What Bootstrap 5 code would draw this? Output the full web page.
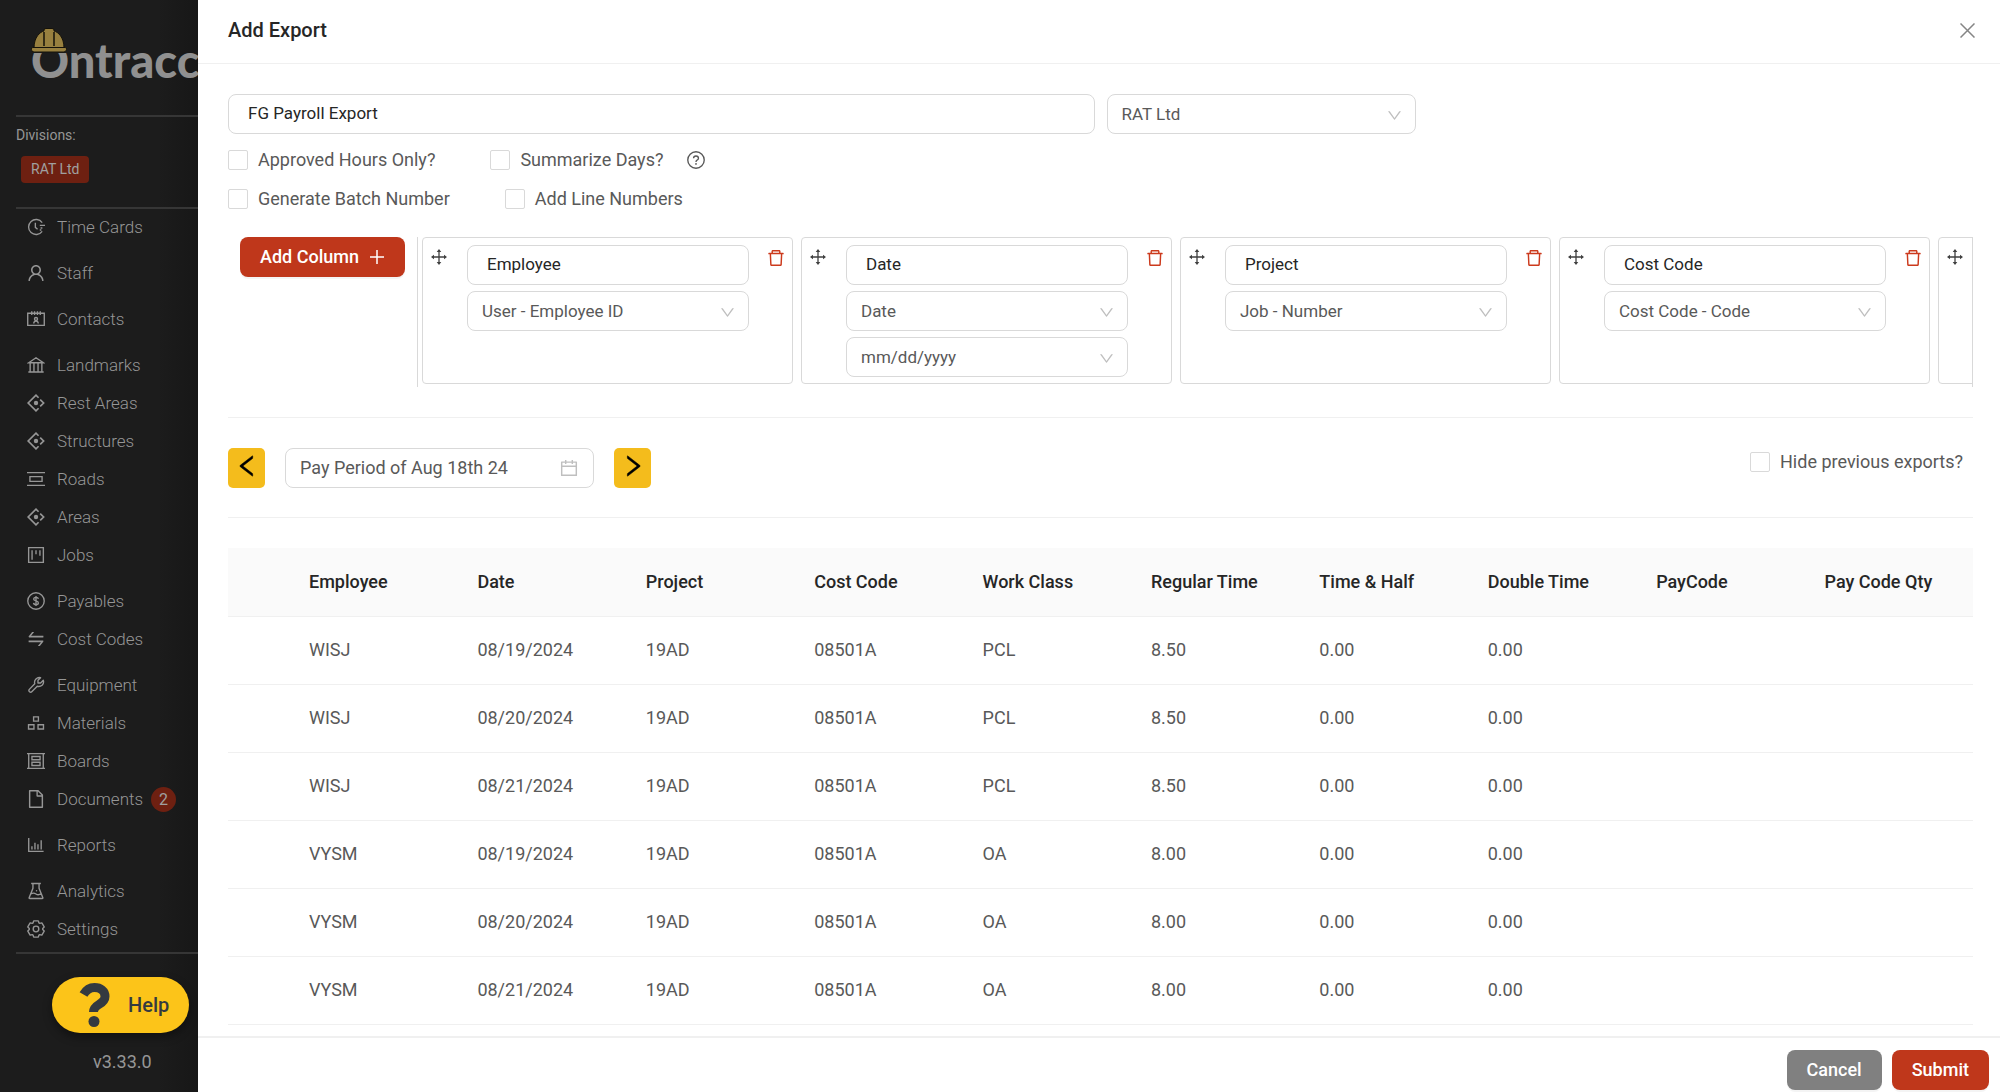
<!DOCTYPE html>
<html lang="en">
<head>
<meta charset="utf-8">
<meta name="viewport" content="width=device-width, initial-scale=1">
<title>Add Export</title>
<link href="https://cdn.jsdelivr.net/npm/bootstrap@5.3.0/dist/css/bootstrap.min.css" rel="stylesheet">
<style>
:root { --brand: #bf371b; --gold: #f4bc1c; --edge: #d9d9d9; --hair: #f0f0f0; --ink: #262626; --soft: #595959; }
body { font-family: Roboto, "Liberation Sans", sans-serif; font-size: 18px; line-height: 24px; color: var(--soft); background: #fff; }
svg { display: block; flex: none; }
.ico { fill: currentColor; }
.line-ico { fill: none; stroke: currentColor; stroke-width: 68; }

/* dimmed sidebar */
.side { width: 198px; flex: none; background: linear-gradient(90deg, #1c1c1c 80%, #171717); color: #969696; font-weight: 300; }
.side-inner { padding-left: 16px; }
.brand-box { height: 115px; padding: 28px 0 0 15px; }
.brand-name { font-family: Lato, sans-serif; font-weight: 900; font-size: 47px; line-height: 48px; color: #909090; margin-top: 8px; white-space: nowrap; }
.hat { position: absolute; left: 0; top: 0; }
.rule { border-top: 2px solid #363636; }
.div-label { font-size: 14px; font-weight: 400; line-height: 20px; margin: 8px 0 11px; }
.div-tag { background: #6e2011; color: #a0a0a0; font-weight: 400; font-size: 14px; line-height: 27px; border-radius: 4px; padding: 0 10px; margin-left: 5px; }
.side-nav { font-size: 17px; margin-top: -1px; }
.side-nav a { color: inherit; text-decoration: none; display: flex; align-items: center; height: 38px; padding-left: 11px; gap: 12px; }
.side-nav .apart { margin-top: 8px; }
.count-dot { background: #6e2011; color: #a0a0a0; width: 25px; height: 25px; border-radius: 50%; font-size: 16px; font-weight: 400; text-align: center; line-height: 25px; margin-left: -4px; }
.help-btn { background: #fcc419; border: 0; border-radius: 28px; width: 137px; height: 56px; color: #343a40; font-weight: 500; font-size: 20px; gap: 18px; padding-left: 27px; margin: 23px 0 17px 36px; box-shadow: 0 4px 10px #0006; }
.version { padding-left: 77px; font-weight: 400; }

/* drawer */
.drawer-head { border-bottom: 1px solid var(--hair); padding: 16px 25px 19px 30px; }
.drawer-head h1 { font-size: 20px; line-height: 28px; font-weight: 500; color: var(--ink); }
.close-x { border: 0; background: none; padding: 0; color: #858585; }
.drawer-body { padding: 30px 27px 0 30px; }
.field, .field:focus { height: 40px; border: 1px solid var(--edge); border-radius: 8px; color: var(--ink); font-size: 17px; line-height: 24px; padding: 0 19px 2px; background-color: #fff; }
.pick, .pick:focus { height: 40px; border: 1px solid var(--edge); border-radius: 8px; color: var(--soft); font-size: 17px; line-height: 24px; padding: 0 40px 0 14px; background-color: #fff;
  --bs-form-select-bg-img: url("data:image/svg+xml,%3csvg xmlns='http://www.w3.org/2000/svg' viewBox='64 64 896 896'%3e%3cpath fill='%23bfbfbf' d='M884 256h-75c-5.1 0-9.9 2.5-12.9 6.6L512 654.2 227.9 262.6c-3-4.1-7.8-6.6-12.9-6.6h-75c-6.5 0-10.3 7.4-6.5 12.7l352.6 486.1c12.8 17.6 39 17.6 51.7 0l352.6-486.1c3.9-5.3.1-12.7-6.4-12.7z'/%3e%3c/svg%3e");
  background-size: 15px 15px; background-position: right 13px top 13px; }
.name-field { width: calc(50% - 6px); }
.mid-w { width: 309px; }
.ticks { margin: 6px 0 19px; }
.tick-row { height: 39px; gap: 55px; }
.tick { display: flex; align-items: center; gap: 10px; }
.tick .form-check-input { width: 20px; height: 20px; margin: 0; border: 1px solid var(--edge); border-radius: 2px; }
.act { height: 40px; border: 0; border-radius: 8px; color: #fff; font-weight: 500; font-size: 18px; line-height: 24px; padding: 0 20px; box-shadow: 0 2px 0 #0000000b; }
.act-red, .act-red:hover { background: var(--brand); color: #fff; }
.act-gray, .act-gray:hover { background: #808080; color: #fff; }
.add-col { margin: 0 12px; padding-right: 21px; gap: 11px; }
.col-strip { height: 150px; border: solid var(--edge); border-width: 0 1px; padding-left: 4px; gap: 8px; }
.col-box { width: 371px; height: 147px; flex: none; border: 1px solid var(--edge); border-radius: 4px; padding: 7px 7px 0 8px; }
.col-fields { width: 282px; gap: 6px; margin: 0 auto 0 20px; }
.icon-btn { border: 0; background: none; padding: 0; height: 26px; display: flex; align-items: center; }
.trash { color: #cc3a1d; }
.split { border-top: 1px solid var(--hair); margin: 30px 0; }
.period + .split { margin-top: 29px; }
.step-btn { width: 37px; height: 40px; border: 0; border-radius: 5px; background: var(--gold); color: #000; padding: 0 0 5px; }
.date-box { height: 40px; border: 1px solid var(--edge); border-radius: 8px; padding: 0 15px 0 14px; color: #bfbfbf; margin: 0 20px; }
.date-box input { border: 0; outline: 0; padding: 0; color: var(--soft); min-width: 0; }
.hide-prev { padding-right: 10px; height: 27px; }
.grid { table-layout: fixed; margin: 0; border-color: var(--hair); color: var(--soft); }
.grid > :not(caption) > * > * { height: 68px; padding: 0 0 0 20px; vertical-align: middle; color: var(--soft); border-color: var(--hair); white-space: nowrap; }
.grid > thead > tr > th { background: #fafafa; color: var(--ink); font-weight: 500; }
.grid .lead-col { width: 61px; }
.drawer-foot { height: 56px; border-top: 2px solid var(--hair); padding: 12px 11px 0; gap: 10px; background: #fff; flex: none; }
</style>
</head>
<body>
<div class="d-flex vh-100 overflow-hidden">
  <aside class="side overflow-hidden">
    <div class="side-inner">
      <div class="brand-box">
        <div class="position-relative">
          <div class="pt-0 overflow-hidden"><div class="brand-name">Ontracc</div></div>
          <svg class="hat" width="36" height="25" viewBox="0 0 36 25">
            <path d="M0 0h36v25H0z" fill="#1c1c1c"/>
            <path d="M3 20C3 9 9 4 13 3V2q0-1.500 2-1.500h6q2 0 2 1.500v1c4 1 10 6 10 17z" fill="#98803f" stroke="#15120a"/>
            <path d="M1.500 19.500h33q1 0 1 2T33 24H3Q.5 24 .5 21.500t1-2z" fill="#98803f" stroke="#15120a"/>
            <path d="M13 4v14M23 4v14" stroke="#15120a" stroke-width="1.500"/>
          </svg>
        </div>
      </div>
      <div class="rule"></div>
      <div class="div-label">Divisions:</div>
      <div class="d-flex mb-4"><span class="div-tag">RAT Ltd</span></div>
      <div class="rule"></div>
      <nav class="side-nav">
        <a href="#"><svg class="line-ico" width="18" height="18" viewBox="64 64 896 896"><path d="M820 290A375 375 0 1 0 820 734M480 300v230l110 90M700 430h260M740 560h90M700 660h80"/></svg>Time Cards</a>
        <a href="#" class="apart"><svg class="ico" width="18" height="18" viewBox="64 64 896 896"><path d="M858.500 763.600a374 374 0 00-80.600-119.500 375.630 375.630 0 00-119.500-80.600c-.4-.2-.8-.3-1.200-.5C719.500 518 760 444.700 760 362c0-137-111-248-248-248S264 225 264 362c0 82.700 40.500 156 102.800 201.100-.4.2-.8.3-1.200.5-44.800 18.900-85 46-119.500 80.600a375.630 375.630 0 00-80.600 119.500A371.700 371.700 0 00136 901.800a8 8 0 008 8.200h60c4.400 0 7.900-3.500 8-7.800 2-77.200 33-149.500 87.800-204.300 56.700-56.700 132-87.900 212.200-87.900s155.500 31.200 212.200 87.900C779 752.700 810 825 812 902.200c.1 4.400 3.600 7.800 8 7.800h60a8 8 0 008-8.200c-1-47.800-10.900-94.300-29.500-138.200zM512 534c-45.900 0-89.100-17.900-121.600-50.400S340 407.900 340 362c0-45.900 17.900-89.100 50.400-121.600S466.100 190 512 190s89.100 17.900 121.600 50.400S684 316.100 684 362c0 45.900-17.900 89.100-50.400 121.600S557.900 534 512 534z"/></svg>Staff</a>
        <a href="#" class="apart"><svg class="line-ico" width="18" height="18" viewBox="64 64 896 896"><path d="M100 228h824v600H100zM300 130v180M440 130v180M584 130v180M724 130v180M400 730q0-110 112-110t112 110"/><circle cx="512" cy="510" r="75"/></svg>Contacts</a>
        <a href="#" class="apart"><svg class="line-ico" width="18" height="18" viewBox="64 64 896 896"><path d="M150 400L512 150l362 250zM130 860h764M220 400v450M410 400v450M614 400v450M804 400v450"/></svg>Landmarks</a>
        <a href="#"><svg class="line-ico" width="18" height="18" viewBox="64 64 896 896"><path d="M640 250L512 122 122 512l390 390 128-128M720 340l172 172-172 172" stroke-width="84"/><circle cx="512" cy="512" r="110" fill="currentColor" stroke="none"/></svg>Rest Areas</a>
        <a href="#"><svg class="line-ico" width="18" height="18" viewBox="64 64 896 896"><path d="M640 250L512 122 122 512l390 390 128-128M720 340l172 172-172 172" stroke-width="84"/><circle cx="512" cy="512" r="110" fill="currentColor" stroke="none"/></svg>Structures</a>
        <a href="#"><svg class="line-ico" width="18" height="18" viewBox="64 64 896 896"><path d="M64 196h896M64 828h896M210 395h604v234H210z"/></svg>Roads</a>
        <a href="#"><svg class="line-ico" width="18" height="18" viewBox="64 64 896 896"><path d="M640 250L512 122 122 512l390 390 128-128M720 340l172 172-172 172" stroke-width="84"/><circle cx="512" cy="512" r="110" fill="currentColor" stroke="none"/></svg>Areas</a>
        <a href="#"><svg class="line-ico" width="18" height="18" viewBox="64 64 896 896"><path d="M146 146h732v732H146zM316 280v464M512 280v200M708 280v270"/></svg>Jobs</a>
        <a href="#" class="apart"><svg class="line-ico" width="18" height="18" viewBox="64 64 896 896"><circle cx="512" cy="512" r="410"/><path d="M630 410q-10-80-118-80t-118 84q0 66 118 92t118 104q0 84-118 84t-122-88M512 260v504"/></svg>Payables</a>
        <a href="#"><svg class="ico" width="18" height="18" viewBox="64 64 896 896"><path d="M847.900 592H152c-4.400 0-8 3.600-8 8v60c0 4.400 3.600 8 8 8h605.200L612.900 851c-4.100 5.200-.4 13 6.300 13h72.500c4.900 0 9.500-2.200 12.600-6.100l168.800-214.100c16.500-21 1.600-51.800-25.200-51.800zM872 356H266.800l144.300-183c4.100-5.200.4-13-6.300-13h-72.500c-4.900 0-9.500 2.200-12.600 6.100L150.900 380.200c-16.500 21-1.600 51.800 25.100 51.800h696c4.400 0 8-3.600 8-8v-60c0-4.400-3.600-8-8-8z"/></svg>Cost Codes</a>
        <a href="#" class="apart"><svg class="line-ico" width="18" height="18" viewBox="64 64 896 896"><path d="M740 150L610 280v130h134l130-130q50 130-60 240-100 90-240 54L300 850q-50 50-110 0t-10-120L450 450q-40-140 60-240 100-94 230-60z" stroke-linejoin="round"/></svg>Equipment</a>
        <a href="#"><svg class="line-ico" width="18" height="18" viewBox="64 64 896 896"><path d="M392 210h240v210H392zM140 600h270v210H140zM614 600h270v210H614z"/></svg>Materials</a>
        <a href="#"><svg class="line-ico" width="18" height="18" viewBox="64 64 896 896"><path d="M150 110v804M874 110v804M64 146h896M64 878h896M310 290h404v160H310zM310 574h404v160H310z"/></svg>Boards</a>
        <a href="#"><svg class="ico" width="18" height="18" viewBox="64 64 896 896"><path d="M854.600 288.600L639.400 73.400c-6-6-14.100-9.400-22.600-9.400H192c-17.700 0-32 14.300-32 32v832c0 17.700 14.300 32 32 32h640c17.700 0 32-14.300 32-32V311.300c0-8.500-3.400-16.700-9.400-22.700zM790.200 326H602V137.800L790.200 326zm1.800 562H232V136h302v216a42 42 0 0042 42h216v494z"/></svg>Documents<span class="count-dot">2</span></a>
        <a href="#" class="apart"><svg class="line-ico" width="18" height="18" viewBox="64 64 896 896"><path d="M150 160v670h740M310 740V580M460 740V400M610 740V480M770 740V280"/></svg>Reports</a>
        <a href="#" class="apart"><svg class="line-ico" width="18" height="18" viewBox="64 64 896 896"><path d="M270 140h484M360 140v240L170 850q-10 34 30 34h624q40 0 30-34L664 380V140M260 660q130-80 250 0t250-10"/><circle cx="540" cy="500" r="36" fill="currentColor" stroke="none"/></svg>Analytics</a>
        <a href="#"><svg class="line-ico" width="18" height="18" viewBox="64 64 896 896"><path stroke-linejoin="round" d="M396 108L628 108L659 211L699 234L804 210L920 410L846 489L846 535L920 614L804 814L699 790L659 813L628 916L396 916L365 813L325 790L220 814L104 614L178 535L178 489L104 410L220 210L325 234L365 211Z"/><circle cx="512" cy="512" r="140"/></svg>Settings</a>
      </nav>
      <div class="rule mt-1"></div>
      <button type="button" class="help-btn d-flex align-items-center">
        <svg width="31" height="44" viewBox="0 0 31 44"><path d="M4.500 11.500C8 5.500 12 4.500 15.500 4.500c6 0 10.500 3.500 10.500 9 0 8.500-11.500 7-11.500 15.500" fill="none" stroke="#343a40" stroke-width="9"/><circle cx="15" cy="38.500" r="5.500" fill="#343a40"/></svg>
        <span>Help</span>
      </button>
      <div class="version">v3.33.0</div>
    </div>
  </aside>

  <main class="d-flex flex-column flex-grow-1 overflow-hidden">
    <header class="drawer-head d-flex align-items-center justify-content-between">
      <h1 class="m-0">Add Export</h1>
      <button type="button" class="close-x" aria-label="Close"><svg width="15" height="15" viewBox="0 0 15 15"><path d="M.5.5l14 14m0-14l-14 14" stroke="currentColor" stroke-width="1.500"/></svg></button>
    </header>

    <div class="drawer-body flex-grow-1 overflow-hidden">
      <div class="d-flex">
        <input type="text" class="form-control field name-field me-2" aria-label="Export name" value="FG Payroll Export">
        <select class="form-select pick mid-w ms-1" aria-label="Division"><option>RAT Ltd</option></select>
      </div>
      <div class="ticks">
        <div class="tick-row d-flex align-items-center">
          <label class="tick"><input type="checkbox" class="form-check-input">Approved Hours Only?</label>
          <div class="d-flex align-items-center gap-4">
            <label class="tick"><input type="checkbox" class="form-check-input">Summarize Days?</label>
            <svg class="line-ico" width="18" height="18" viewBox="64 64 896 896"><circle cx="512" cy="512" r="410"/><path d="M390 430q0-120 122-120t122 110q0 70-70 100-52 24-52 90"/><circle cx="512" cy="710" r="44" fill="currentColor" stroke="none"/></svg>
          </div>
        </div>
        <div class="tick-row d-flex align-items-center">
          <label class="tick"><input type="checkbox" class="form-check-input">Generate Batch Number</label>
          <label class="tick"><input type="checkbox" class="form-check-input">Add Line Numbers</label>
        </div>
      </div>

      <div class="d-flex align-items-start">
        <button type="button" class="btn act act-red add-col d-flex align-items-center flex-shrink-0">Add Column<svg width="14" height="14" viewBox="0 0 14 14"><path d="M7 0v14M0 7h14" stroke="#fff" stroke-width="1.500"/></svg></button>
        <div class="col-strip d-flex flex-grow-1 overflow-hidden" id="strip"></div>
      </div>

      <div class="split"></div>
      <div class="period d-flex align-items-start">
        <button type="button" class="step-btn d-flex align-items-center justify-content-center" aria-label="Previous period"><svg class="ico" width="24" height="24" viewBox="64 64 896 896"><path stroke="#000" stroke-width="20" d="M724 218.300V141c0-6.700-7.700-10.400-12.900-6.300L260.300 486.800a31.860 31.860 0 000 50.300l450.800 352.100c5.300 4.100 12.900.4 12.900-6.300v-77.300c0-4.900-2.300-9.600-6.100-12.600l-360-281 360-281.100c3.800-3 6.100-7.700 6.100-12.600z"/></svg></button>
        <div class="date-box mid-w d-flex align-items-center">
          <input type="text" class="flex-grow-1" aria-label="Pay period" value="Pay Period of Aug 18th 24">
          <svg class="ico" width="18" height="18" viewBox="64 64 896 896"><path d="M880 184H712v-64c0-4.400-3.600-8-8-8h-56c-4.400 0-8 3.600-8 8v64H384v-64c0-4.400-3.600-8-8-8h-56c-4.400 0-8 3.600-8 8v64H144c-17.700 0-32 14.300-32 32v664c0 17.700 14.300 32 32 32h736c17.700 0 32-14.300 32-32V216c0-17.700-14.300-32-32-32zm-40 656H184V460h656v380zM184 392V256h128v48c0 4.400 3.600 8 8 8h56c4.400 0 8-3.600 8-8v-48h256v48c0 4.400 3.600 8 8 8h56c4.400 0 8-3.600 8-8v-48h128v136H184z"/></svg>
        </div>
        <button type="button" class="step-btn d-flex align-items-center justify-content-center" aria-label="Next period"><svg class="ico" width="24" height="24" viewBox="64 64 896 896"><path stroke="#000" stroke-width="20" d="M765.700 486.800L314.900 134.700A7.970 7.970 0 00302 141v77.300c0 4.900 2.300 9.600 6.100 12.600l360 281.100-360 281.100c-3.900 3-6.100 7.700-6.100 12.600V883c0 6.700 7.700 10.400 12.900 6.300l450.800-352.100a31.960 31.960 0 000-50.400z"/></svg></button>
        <label class="tick hide-prev ms-auto"><input type="checkbox" class="form-check-input">Hide previous exports?</label>
      </div>
      <div class="split"></div>

      <table class="table grid">
        <thead><tr><th class="lead-col"></th><th>Employee</th><th>Date</th><th>Project</th><th>Cost Code</th><th>Work Class</th><th>Regular Time</th><th>Time &amp; Half</th><th>Double Time</th><th>PayCode</th><th>Pay Code Qty</th></tr></thead>
        <tbody>
          <tr><td></td><td>WISJ</td><td>08/19/2024</td><td>19AD</td><td>08501A</td><td>PCL</td><td>8.50</td><td>0.00</td><td>0.00</td><td></td><td></td></tr>
          <tr><td></td><td>WISJ</td><td>08/20/2024</td><td>19AD</td><td>08501A</td><td>PCL</td><td>8.50</td><td>0.00</td><td>0.00</td><td></td><td></td></tr>
          <tr><td></td><td>WISJ</td><td>08/21/2024</td><td>19AD</td><td>08501A</td><td>PCL</td><td>8.50</td><td>0.00</td><td>0.00</td><td></td><td></td></tr>
          <tr><td></td><td>VYSM</td><td>08/19/2024</td><td>19AD</td><td>08501A</td><td>OA</td><td>8.00</td><td>0.00</td><td>0.00</td><td></td><td></td></tr>
          <tr><td></td><td>VYSM</td><td>08/20/2024</td><td>19AD</td><td>08501A</td><td>OA</td><td>8.00</td><td>0.00</td><td>0.00</td><td></td><td></td></tr>
          <tr><td></td><td>VYSM</td><td>08/21/2024</td><td>19AD</td><td>08501A</td><td>OA</td><td>8.00</td><td>0.00</td><td>0.00</td><td></td><td></td></tr>
        </tbody>
      </table>
    </div>

    <footer class="drawer-foot d-flex justify-content-end">
      <button type="button" class="btn act act-gray">Cancel</button>
      <button type="button" class="btn act act-red">Submit</button>
    </footer>
  </main>
</div>
<script>
  // One box per export column: heading, data source and optional format.
  const columns = [
    ['Employee', 'User - Employee ID'],
    ['Date', 'Date', 'mm/dd/yyyy'],
    ['Project', 'Job - Number'],
    ['Cost Code', 'Cost Code - Code'],
    null
  ];
  const move = '<svg class="mt-1" width="16" height="16" viewBox="0 0 16 16" fill="#404040"><path d="M8 2v12M2 8h12" stroke="#404040" stroke-width="1.300"/><path d="M8 0l2.300 3H5.700zM8 16l2.300-3H5.700zM0 8l3-2.300v4.600zM16 8l-3-2.300v4.600z"/></svg>';
  const trash = '<button type="button" class="icon-btn trash" aria-label="Delete column"><svg class="ico" width="18" height="18" viewBox="64 64 896 896"><path d="M360 184h-8c4.400 0 8-3.600 8-8v8h304v-8c0 4.400 3.600 8 8 8h-8v72h72v-80c0-35.300-28.700-64-64-64H352c-35.300 0-64 28.700-64 64v80h72v-72zm504 72H160c-17.700 0-32 14.300-32 32v32c0 4.400 3.600 8 8 8h60.400l24.700 523c1.600 34.100 29.800 61 63.900 61h454c34.200 0 62.300-26.800 63.900-61l24.700-523H888c4.400 0 8-3.600 8-8v-32c0-17.700-14.300-32-32-32zM731.300 840H292.700l-24.200-512h487l-24.200 512z"/></svg></button>';
  document.getElementById('strip').innerHTML = columns.map(c => '<div class="col-box d-flex align-items-start">' + move +
    (c ? '<div class="col-fields d-flex flex-column"><input type="text" class="form-control field" aria-label="Column heading" value="' + c[0] + '">' +
      c.slice(1).map(s => '<select class="form-select pick" aria-label="Column source"><option>' + s + '</option></select>').join('') + '</div>' + trash : '') + '</div>').join('');
</script>
<script src="https://cdn.jsdelivr.net/npm/bootstrap@5.3.0/dist/js/bootstrap.bundle.min.js"></script>
</body>
</html>
